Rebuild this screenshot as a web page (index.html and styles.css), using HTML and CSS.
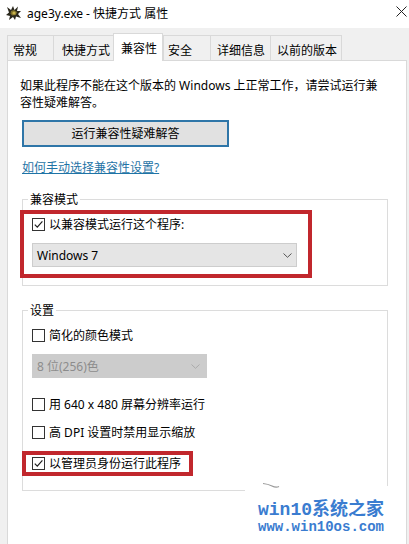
FILE: index.html
```html
<!DOCTYPE html>
<html lang="zh-CN">
<head>
<meta charset="utf-8">
<title>age3y.exe - 快捷方式 属性</title>
<link rel="stylesheet" href="styles.css">
</head>
<body>
<div class="titlebar">
  <svg class="app-icon" width="16" height="16" viewBox="0 0 16 16">
    <polygon points="1,2 5,5 7,1 8.5,5 12,1.5 11,6 15,6 12,9 15,13 10,11.5 9,15 7,12 3,15 4,11 0,10 3,7.5" fill="#2a271c"/>
    <polygon points="5,6 8,5 11,7 10,10 6,10.5 4.5,8.5" fill="#7d6f2a"/>
    <circle cx="8" cy="8" r="1.6" fill="#c9b24a"/>
  </svg>
  <span class="title">age3y.exe - 快捷方式 属性</span>
  <svg class="close" width="11" height="11" viewBox="0 0 11 11">
    <path d="M0.5 0.5 L10.5 10.5 M10.5 0.5 L0.5 10.5" stroke="#222" stroke-width="1" fill="none"/>
  </svg>
</div>

<div class="tabs">
  <div class="tab tab-general">常规</div>
  <div class="tab tab-shortcut">快捷方式</div>
  <div class="tab tab-compat active">兼容性</div>
  <div class="tab tab-security">安全</div>
  <div class="tab tab-details">详细信息</div>
  <div class="tab tab-previous">以前的版本</div>
</div>

<div class="panel">
  <p class="intro">如果此程序不能在这个版本的 Windows 上正常工作，请尝试运行兼容性疑难解答。</p>
  <button class="btn" type="button">运行兼容性疑难解答</button>
  <a class="link" href="#">如何手动选择兼容性设置?</a>

  <div class="group group-mode">
    <div class="legend">兼容模式</div>
    <div class="highlight highlight-mode">
      <label class="check">
        <span class="box"><svg width="11" height="11" viewBox="0 0 11 11"><path d="M1.8 5.6 L4.3 8.2 L9.4 2.4" stroke="#1e1e1e" stroke-width="1.2" fill="none"/></svg></span>
        以兼容模式运行这个程序:
      </label>
      <div class="select select-os">
        <span>Windows 7</span>
        <svg class="chev" width="9" height="5" viewBox="0 0 9 5"><path d="M0.5 0.5 L4.5 4.3 L8.5 0.5" stroke="#555" stroke-width="1" fill="none"/></svg>
      </div>
    </div>
  </div>

  <div class="group group-settings">
    <div class="legend">设置</div>
    <label class="check check-first"><span class="box"></span>简化的颜色模式</label>
    <div class="select select-color disabled">
      <span>8 位(256)色</span>
      <svg class="chev" width="9" height="5" viewBox="0 0 9 5"><path d="M0.5 0.5 L4.5 4.3 L8.5 0.5" stroke="#aaa" stroke-width="1" fill="none"/></svg>
    </div>
    <label class="check check-res"><span class="box"></span>用 640 x 480 屏幕分辨率运行</label>
    <label class="check check-dpi"><span class="box"></span>高 DPI 设置时禁用显示缩放</label>
    <div class="highlight highlight-admin">
      <label class="check">
        <span class="box"><svg width="11" height="11" viewBox="0 0 11 11"><path d="M1.8 5.6 L4.3 8.2 L9.4 2.4" stroke="#1e1e1e" stroke-width="1.2" fill="none"/></svg></span>
        以管理员身份运行此程序
      </label>
    </div>
  </div>
</div>

<div class="watermark">
  <svg class="wm-stroke" width="18" height="6" viewBox="0 0 18 6"><path d="M1 1.5 Q6 2 10 4 T17 4.5" stroke="#9a9a9a" stroke-width="1.2" fill="none"/></svg>
  <div class="wm-line1">win10系统之家</div>
  <div class="wm-line2">www.win10os.com</div>
</div>
</body>
</html>
```

FILE: styles.css
```css
html, body {
  margin: 0;
  padding: 0;
}
body {
  width: 409px;
  height: 544px;
  overflow: hidden;
  position: relative;
  background: #f0f0f0;
  font-family: "Noto Sans", "Noto Sans CJK SC", sans-serif;
  font-size: 12px;
  line-height: 17px;
  color: #000;
}

/* title bar */
.titlebar {
  height: 28px;
  background: #fff;
  display: flex;
  align-items: center;
  padding-left: 6px;
}
.app-icon {
  margin-top: -3px;
  flex: none;
}
.title {
  margin-left: 5px;
  flex: 1;
  margin-top: -1px;
}
.close {
  margin-right: 2px;
  margin-top: -5px;
}

/* tabs */
.tabs {
  height: 32px;
  display: flex;
  align-items: flex-end;
  padding-left: 7px;
}
.tab {
  box-sizing: border-box;
  height: 25px;
  padding-top: 6px;
  border-top: 1px solid #d9d9d9;
  border-left: 1px solid #d9d9d9;
  background: #f0f0f0;
  white-space: nowrap;
}
.tab-general { width: 46px; padding-left: 5px; }
.tab-shortcut { width: 60px; padding-left: 8px; }
.tab-compat { width: 50px; padding-left: 7px; }
.tab-security { width: 47px; padding-left: 4px; }
.tab-details { width: 60px; padding-left: 6px; }
.tab-previous { width: 72px; padding-left: 6px; border-right: 1px solid #d9d9d9; }
.tab.active {
  height: 28px;
  padding-top: 6px;
  margin-bottom: -1px;
  background: #fff;
  border-right: 1px solid #d9d9d9;
  position: relative;
  z-index: 1;
}

/* panel */
.panel {
  box-sizing: border-box;
  margin-left: 7px;
  width: 400px;
  height: 484px;
  background: #fff;
  border: 1px solid #d9d9d9;
  border-bottom: none;
  padding: 16px 12px 0 12px;
}
.intro {
  margin: 0;
  max-width: 364px;
}
.btn {
  display: block;
  box-sizing: border-box;
  margin: 9px 0 0 2px;
  width: 207px;
  height: 27px;
  border: 2px solid #2f76a8;
  background: #e1e1e1;
  font: inherit;
  color: #000;
  padding: 0;
  text-align: center;
}
.link {
  display: block;
  width: fit-content;
  margin: 12px 0 0 2px;
  color: #1f74a6;
  text-decoration: underline;
}

/* group boxes */
.group {
  box-sizing: border-box;
  width: 366px;
  margin-left: 2px;
  border: 1px solid #dcdcdc;
  padding-left: 9px;
}
.group-mode {
  margin-top: 23px;
  padding-bottom: 7px;
}
.group-settings {
  margin-top: 24px;
  padding-bottom: 14px;
}
.legend {
  width: fit-content;
  margin: -9px 0 0 -4px;
  padding: 0 2px;
  background: #fff;
}

/* red highlight frames */
.highlight {
  box-sizing: border-box;
  border: 4px solid #c1272d;
}
.highlight-mode {
  margin: 2px 0 0 -12px;
  width: 292px;
  padding: 2px 0 7px 8px;
}
.highlight-admin {
  margin: 10px 0 0 -10px;
  width: 171px;
  padding: 0 0 0 6px;
}

/* checkboxes */
.check {
  display: flex;
  align-items: center;
  gap: 4px;
  white-space: nowrap;
}
.box {
  box-sizing: border-box;
  width: 13px;
  height: 13px;
  border: 1px solid #333;
  background: #fff;
  display: flex;
  align-items: center;
  justify-content: center;
  flex: none;
}
.check-first { margin-top: 8px; }
.check-res { margin-top: 18px; }
.check-dpi { margin-top: 11px; }

/* dropdowns */
.select {
  box-sizing: border-box;
  height: 24px;
  margin-top: 10px;
  display: flex;
  align-items: center;
  justify-content: space-between;
  padding: 0 4px 0 4px;
  background: #e5e5e5;
  border: 1px solid #cdcdcd;
}
.select-os { width: 265px; }
.select-color {
  width: 175px;
  padding-right: 6px;
}
.select.disabled {
  background: #cccccc;
  border-color: #cccccc;
  color: #8c8c8c;
}

/* watermark overlay */
.watermark {
  position: absolute;
  left: 245px;
  top: 486px;
  width: 160px;
  height: 58px;
  background: #fff;
  box-sizing: border-box;
  padding: 14px 0 0 13px;
  color: #3a7cd0;
  font-family: "Liberation Mono", "Noto Sans CJK SC", monospace;
  font-weight: bold;
  white-space: nowrap;
}
.wm-stroke {
  position: absolute;
  left: 17px;
  top: -4px;
}
.wm-line1 {
  font-size: 18px;
  line-height: 20px;
}
.wm-line2 {
  font-size: 14px;
  line-height: 15px;
}
```
